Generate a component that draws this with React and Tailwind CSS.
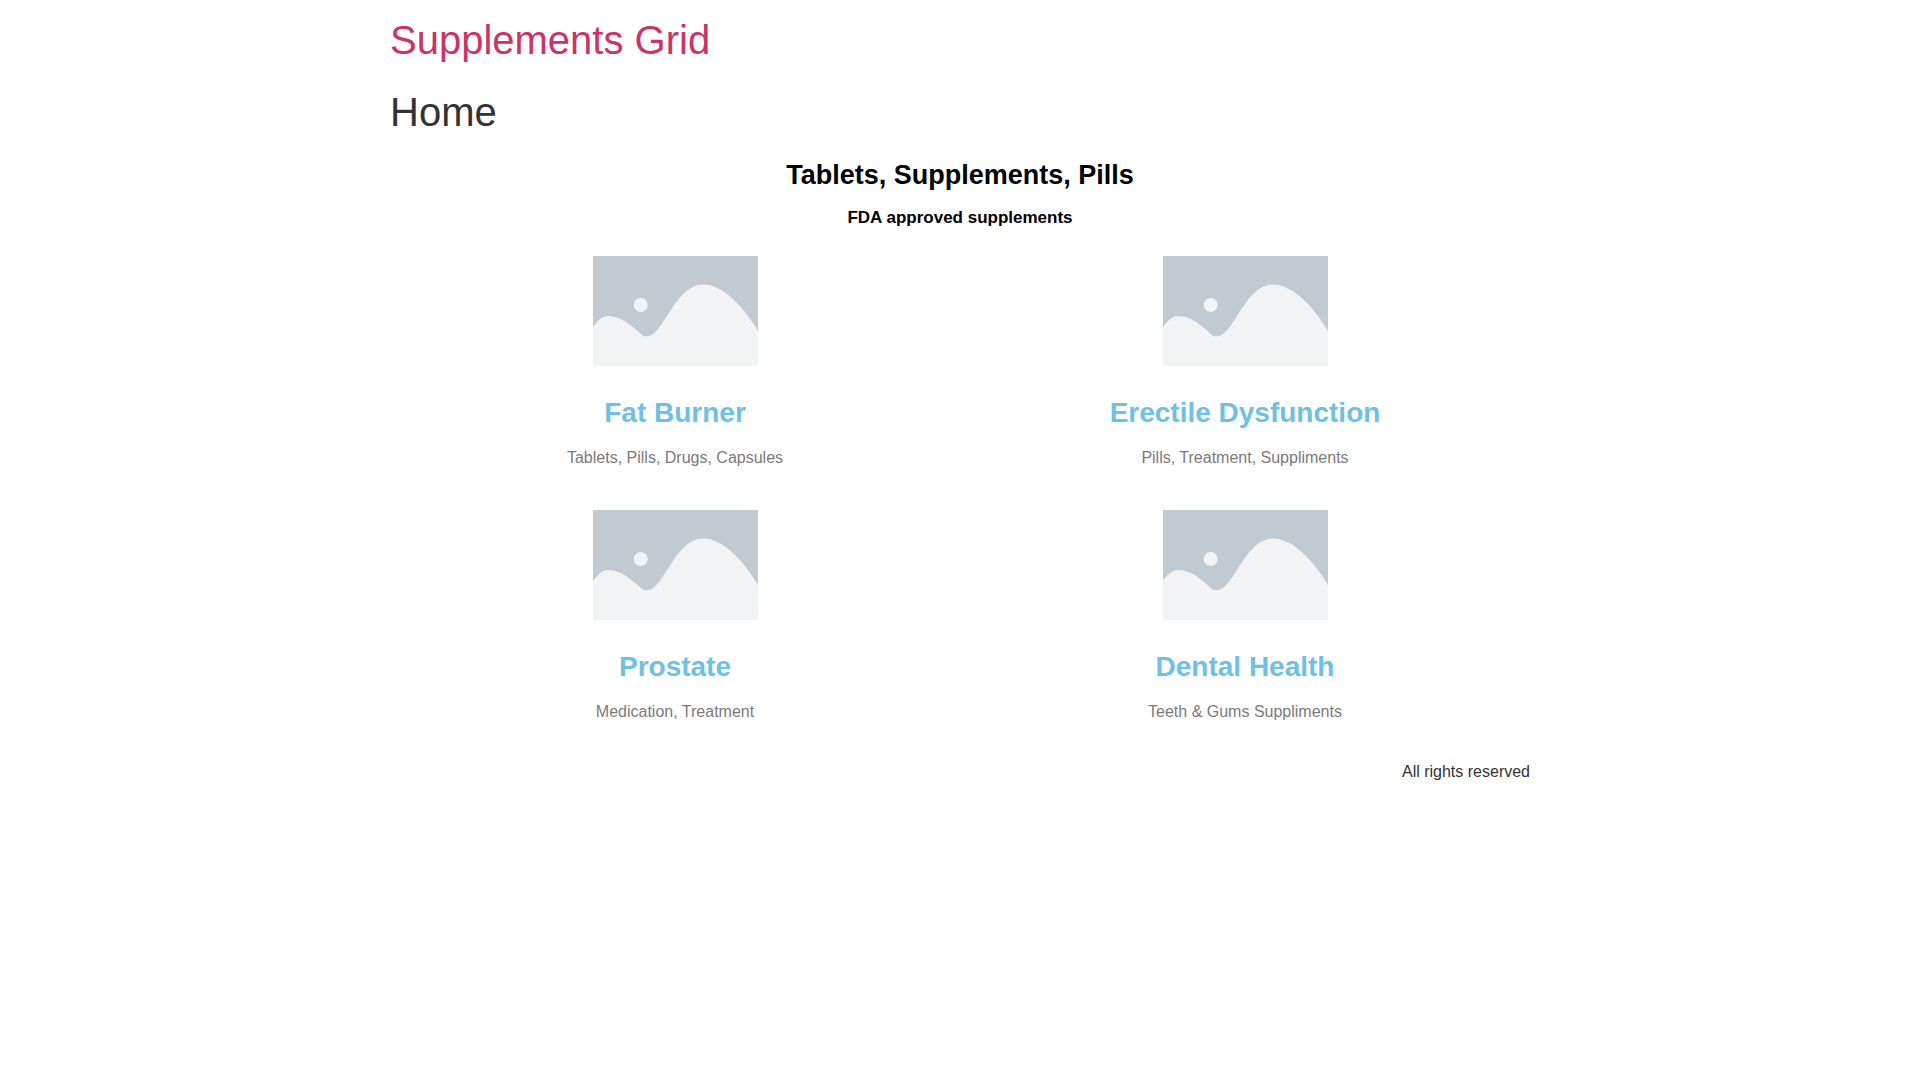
const categories = [
  { title: 'Fat Burner', description: 'Tablets, Pills, Drugs, Capsules' },
  { title: 'Erectile Dysfunction', description: 'Pills, Treatment, Suppliments' },
  { title: 'Prostate', description: 'Medication, Treatment' },
  { title: 'Dental Health', description: 'Teeth & Gums Suppliments' },
];

const PlaceholderImage = () => (
  <svg viewBox="0 0 165 110" className="w-[165px] h-[110px]" aria-hidden="true">
    <rect width="165" height="110" fill="#c2cad1" />
    <path
      d="M0 71C3.500 66.500 8 60 15.500 60C28 60 39 70 48.500 78.500C50.500 80.300 52.500 80.500 54.500 80.300C71 79 82 28.500 110 28.500C131 28.500 152 53 165 75V110H0Z"
      fill="#f1f3f5"
    />
    <circle cx="47.700" cy="49" r="7" fill="#f1f3f5" />
  </svg>
);

const CategoryCard = ({ title, description }) => (
  <article className="flex flex-col items-center text-center">
    <a href="#" aria-label={title}>
      <PlaceholderImage />
    </a>
    <h3 className="mt-[30px] text-[28px] leading-[34px] font-bold text-[#6ec1e4]">
      <a href="#">{title}</a>
    </h3>
    <p className="mt-4 text-base leading-6 text-[#7a7a7a]">{description}</p>
  </article>
);

const App = () => {
  return (
    <div className="mx-auto max-w-[1140px] font-['Liberation_Sans',Arial,sans-serif] text-[#333333]">
      <header className="py-4">
        <p className="text-[40px] leading-12">
          <a href="#" className="text-[#cc3366]">Supplements Grid</a>
        </p>
      </header>

      <main>
        <h1 className="mt-2 text-[40px] leading-12">Home</h1>

        <section className="mt-6 text-center font-bold text-black">
          <h2 className="text-[27px] leading-[30px]">Tablets, Supplements, Pills</h2>
          <h4 className="mt-5 text-[17px] leading-4">FDA approved supplements</h4>
        </section>

        <section className="mt-[30px] grid grid-cols-1 gap-y-10 sm:grid-cols-2">
          {categories.map((category) => (
            <CategoryCard key={category.title} {...category} />
          ))}
        </section>
      </main>

      <footer className="py-9 text-right text-base leading-6">
        <p>All rights reserved</p>
      </footer>
    </div>
  );
};

export default App;
